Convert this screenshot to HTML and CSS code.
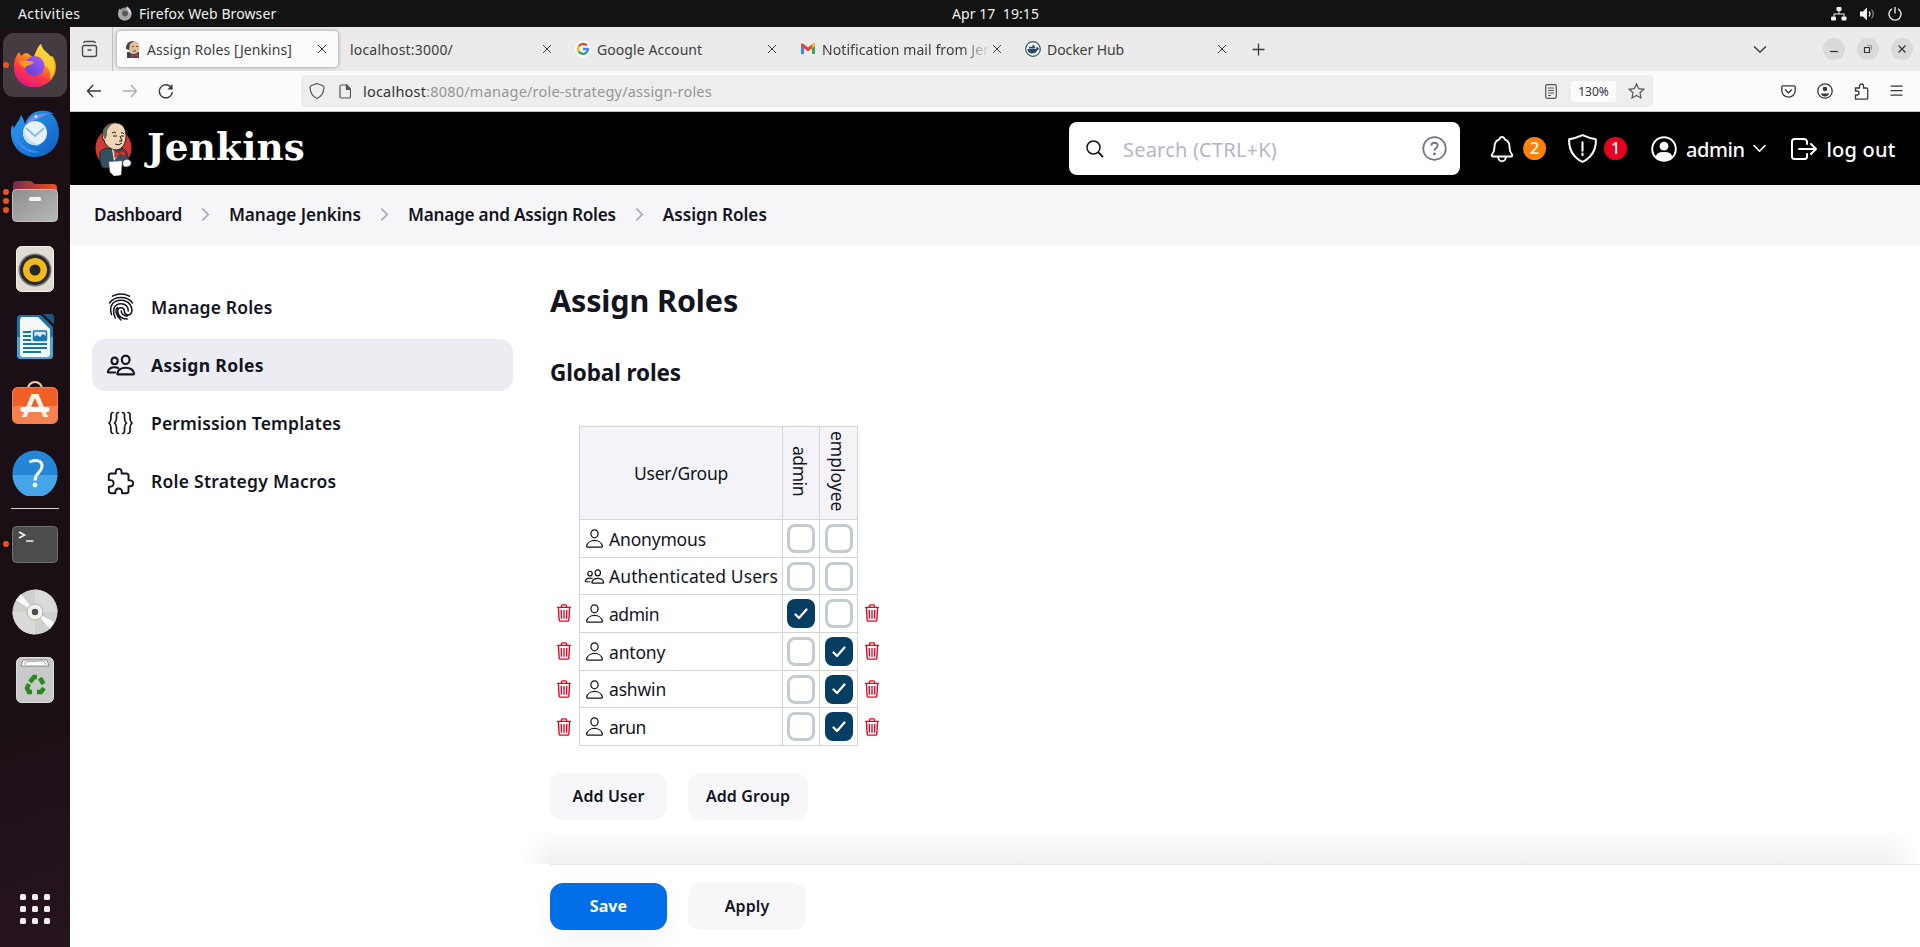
FILE: index.html
```html
<!DOCTYPE html>
<html lang="en">
<head>
<meta charset="utf-8">
<title>Assign Roles [Jenkins]</title>
<link rel="stylesheet" href="styles.css">
</head>
<body>
<svg class="defs" width="0" height="0">
  <defs>
    <symbol id="person" viewBox="0 0 512 512"><path d="M344 144c-3.92 52.87-44 96-88 96s-84.15-43.12-88-96c-4-55 35-96 88-96s92 42 88 96z"/><path d="M256 304c-87 0-175.3 48-191.64 138.6C62.39 453.52 68.57 464 80 464h352c11.44 0 17.62-10.48 15.65-21.4C431.3 352 343 304 256 304z"/></symbol>
    <symbol id="people" viewBox="0 0 512 512"><path d="M402 168c-2.93 40.67-33.1 72-66 72s-63.12-31.32-66-72c-3-42.31 26.37-72 66-72s69 30.46 66 72z"/><path d="M336 304c-65.17 0-127.84 32.37-143.54 95.41-2.08 8.34 3.15 16.59 11.72 16.59h263.65c8.57 0 13.77-8.25 11.72-16.59C463.85 335.36 401.18 304 336 304z"/><path d="M200 185.94c-2.34 32.48-26.72 58.06-53 58.06s-50.7-25.57-53-58.06C91.61 152.15 115.34 128 147 128s55.39 24.77 53 57.94z"/><path d="M206 306c-18.05-8.27-37.93-11.45-59-11.45-52 0-102.1 25.85-114.65 76.2-1.65 6.66 2.53 13.25 9.37 13.25H154"/></symbol>
    <symbol id="trash" viewBox="0 0 512 512"><path d="M112 112l20 320c.95 18.49 14.4 32 32 32h184c17.67 0 30.87-13.51 32-32l20-320M80 112h352M192 112V72a24 24 0 0124-24h80a24 24 0 0124 24v40M256 176v224M184 176l8 224M328 176l-8 224"/></symbol>
    <symbol id="close" viewBox="0 0 10 10"><path d="M1 1l8 8M9 1l-8 8"/></symbol>
    <symbol id="chev" viewBox="0 0 10 16"><path d="M1.500 1.500L8 8l-6.500 6.500"/></symbol>
    <linearGradient id="ffx" x1=".8" y1="0" x2=".3" y2="1"><stop offset="0" stop-color="#fff44f"/><stop offset=".4" stop-color="#ff980e"/><stop offset=".7" stop-color="#ff3647"/><stop offset="1" stop-color="#e31587"/></linearGradient>
    <linearGradient id="ffp" x1="0" y1="1" x2="1" y2="0"><stop offset="0" stop-color="#5b3fd0"/><stop offset="1" stop-color="#a45cff"/></linearGradient>
    <linearGradient id="tb" x1="0" y1="0" x2="1" y2="1"><stop offset="0" stop-color="#2ba0f7"/><stop offset="1" stop-color="#0f5cc0"/></linearGradient>
    <linearGradient id="folder" x1="0" x2="1"><stop offset="0" stop-color="#7c2a50"/><stop offset="1" stop-color="#ea5420"/></linearGradient>
    <linearGradient id="grey" x1="0" y1="0" x2="1" y2="1"><stop offset="0" stop-color="#8e8e8e"/><stop offset="1" stop-color="#b8b8b8"/></linearGradient>
  </defs>
</svg>

<header class="topbar">
  <span class="activities">Activities</span>
  <svg class="app-ic" viewBox="0 0 16 16" width="16" height="16"><circle cx="7.800" cy="8" r="6.500" fill="#8b8b8b"/><path d="M1 8C1 5 2 4 2.500 2.500L5 5l3-1 2-4c2 2 4 3 4.500 7S12 14.500 8 14.500 1 12 1 8z" fill="#a8a8a8"/><circle cx="8" cy="7.500" r="3" fill="#5a5a5a"/><path d="M10 1c2 2 4.500 4 4 8-1-3-4-4-4-8z" fill="#e4e4e4"/></svg>
  <span class="appname">Firefox Web Browser</span>
  <span class="clock">Apr 17&nbsp; 19:15</span>
  <div class="status">
    <svg width="16" height="14" viewBox="0 0 16 14" fill="#f2f2f2"><rect x="5.500" y="0" width="5" height="4" rx="1"/><rect x="0" y="9.500" width="5" height="4" rx="1"/><rect x="10.500" y="9.500" width="5" height="4" rx="1"/><path d="M7.500 4h1v2.500h5v3h-1v-2h-9v2h-1v-3h5z"/></svg>
    <svg width="15" height="14" viewBox="0 0 15 14"><path d="M0 4.500h3L7 .5v13L3 9.500H0z" fill="#f2f2f2"/><path d="M9 4.500q2 2.500 0 5" fill="none" stroke="#ddd" stroke-width="1.300"/><path d="M11.500 2.500q3.500 4.500 0 9" fill="none" stroke="#888" stroke-width="1.200"/></svg>
    <svg width="14" height="14" viewBox="0 0 14 14" fill="none" stroke="#e8e8e8" stroke-width="1.400"><path d="M4 1.900a6 6 0 1 0 6 0M7 0v6.500"/></svg>
  </div>
</header>

<div class="desk">
<nav class="dock">
  <div class="slot focus"><i class="dot"></i>
    <svg width="44" height="44" viewBox="0 0 44 44"><path d="M1 24C1 17 3 13 6 9l2 4c2-2 4-3 6-3l6 4c3-3 3-9 8-13 1 6 6 8 9 12 2-0 3 1 3 1 5 8 3 18-2 23C27 48 12 45 6 38 2 33 1 29 1 24z" fill="url(#ffx)"/><path d="M28 1c1 6 6 8 9 12 6 8 6 18 0 24 2-9-3-14-8-16-6-3-8-8-7-10 3-3 3-7 6-10z" fill="#ffd83a" opacity=".75"/><circle cx="21.500" cy="23" r="10" fill="url(#ffp)"/><path d="M6 18c3 0 10-1 15 1-2 4-7 2-9 6-3-1-5-4-6-7z" fill="#ff9a1d"/></svg></div>
  <div class="slot bird">
    <svg width="48" height="48" viewBox="0 0 48 48"><path d="M0 22c0-5 1-6 2-7l1 4c1-5 5-7 7-14 2 3 3 6 4 9C18 3 26 0 34 1c4 0 7 2 9 3h-3c5 3 8 11 8 19 0 13-10 24-24 24C11 47 0 37 0 22z" fill="url(#tb)"/><path d="M16 13C21 4 30 3 40 4c-9 0-12 6-24 9z" fill="#7f8cf2"/><path d="M5 20c0 12 9 20 24 22C16 45 4 36 5 20z" fill="#3b8df0"/><circle cx="24" cy="23" r="12" fill="#e6f1fc"/><path d="M13 18c2 12 8 14 16 17-4 1-8 0-12-2-4-4-6-9-4-15z" fill="#c5dff8"/><path d="M15 18l9 8 9-8" fill="none" stroke="#8bb9e8" stroke-width="1.800"/><circle cx="25" cy="6.500" r="1.300" fill="#fff"/></svg></div>
  <div class="slot"><i class="dot upper"></i><i class="dot"></i><i class="dot lower"></i>
    <svg width="46" height="42" viewBox="0 0 46 42"><path d="M1 5a4 4 0 0 1 4-4h13c3 0 3 3 5 3h18a4 4 0 0 1 4 4v12H1z" fill="url(#folder)"/><rect x=".5" y="9.500" width="45" height="32" rx="4" fill="url(#grey)" stroke="#c0c0c0"/><rect x="17" y="17" width="12" height="4" rx="1.500" fill="#f5f5f5"/></svg></div>
  <div class="slot">
    <svg width="38" height="46" viewBox="0 0 38 46"><rect x=".5" y=".5" width="37" height="45" rx="5" fill="#e0dcd3" stroke="#f3f0e9"/><circle cx="19" cy="24" r="16.500" fill="#777"/><circle cx="19" cy="24" r="15" fill="#2b2930"/><circle cx="19" cy="24" r="12" fill="#f0b91c"/><circle cx="19" cy="24" r="5.500" fill="#26252b"/></svg></div>
  <div class="slot">
    <svg width="38" height="46" viewBox="0 0 38 46"><path d="M4 1h21l12 12v28a4 4 0 0 1-4 4H5a4 4 0 0 1-4-4V5a4 4 0 0 1 3-4z" fill="#1b75a9"/><path d="M1 23h36v18a4 4 0 0 1-4 4H5a4 4 0 0 1-4-4z" fill="#4aa6d8"/><path d="M6 3h16l12 12v25a3 3 0 0 1-3 3H7a3 3 0 0 1-3-3V6a3 3 0 0 1 2-3z" fill="#f5f6f7"/><path d="M27 0h8a3 3 0 0 1 3 3v7z" fill="#185a80"/><path d="M7 18h8M7 22h8M7 26h8M7 30h24M7 34h24M7 38h18" stroke="#1576b0" stroke-width="2"/><rect x="17.500" y="17" width="13" height="9.500" rx="1" fill="#cfe3f0" stroke="#1576b0" stroke-width="1.500"/><path d="M18 26v-3l3-2 3 2 3-3 3 2v4z" fill="#1576b0"/></svg></div>
  <div class="slot shop">
    <svg width="46" height="44" viewBox="0 0 46 44"><path d="M16 9a7 7 0 0 1 14 0" fill="none" stroke="#f1cf9c" stroke-width="2"/><rect x=".5" y="7.500" width="45" height="36" rx="5" fill="#ef5f26" stroke="#f4824f"/><path d="M1 26h44v12a5 5 0 0 1-5 5H6a5 5 0 0 1-5-5z" fill="#f58350"/><path d="M10 37l9.500-23h7L36 37h-4.500L23 18l-8.500 19z" fill="#fff3ec"/><rect x="8.500" y="27" width="29" height="5" rx="2.500" fill="#fff"/></svg></div>
  <div class="slot">
    <svg width="46" height="46" viewBox="0 0 46 46"><circle cx="23" cy="23" r="22.500" fill="#2586d8"/><path d="M.5 25h45a22.500 22.500 0 0 1-45 0z" fill="#45a5e6"/><path d="M17.500 12c6-3 13-1.500 12.500 4.500-.5 6-7 6.500-7 14" fill="none" stroke="#fff" stroke-width="3"/><circle cx="23" cy="35" r="2.400" fill="#fff"/></svg></div>
  <div class="sep"></div>
  <div class="slot"><i class="dot"></i>
    <svg width="46" height="37" viewBox="0 0 46 37"><rect x=".5" y=".5" width="45" height="36" rx="4" fill="#4c4c4c" stroke="#6e716e"/><path d="M7 6l5.500 3L7 12M14 15h7.500" fill="none" stroke="#f2f2f2" stroke-width="1.700"/></svg></div>
  <div class="slot">
    <svg width="46" height="46" viewBox="0 0 46 46"><circle cx="23" cy="23" r="22.500" fill="#cfcfcf"/><path d="M23 23V.5A22.500 22.500 0 0 1 45.500 23zM23 23v22.500A22.500 22.500 0 0 1 .5 23z" fill="#dadada"/><path d="M23 23L4 11l5-6zM23 23l19 10-4 7z" fill="#fafafa"/><circle cx="23" cy="23" r="8" fill="#f4f3f0" stroke="#b9b09b"/><circle cx="23" cy="23" r="3.200" fill="#4d4d4d"/></svg></div>
  <div class="slot">
    <svg width="38" height="46" viewBox="0 0 38 46"><rect x=".5" y=".5" width="37" height="45" rx="5" fill="#c9c9c9" stroke="#dedede"/><path d="M5 9l2-6h24l2 6z" fill="#fff" stroke="#777" stroke-width=".8"/><path d="M9 8V5l18-1 4 4" fill="none" stroke="#aaa"/><g fill="none" stroke="#268a1c" stroke-width="4.500"><path d="M14 25l4-5h3M24 21l3.500 6M28 31l-3 4h-4M16 35h-3l-2-4 2-4"/></g></svg></div>
  <div class="grow"></div>
  <div class="apps"><i></i><i></i><i></i><i></i><i></i><i></i><i></i><i></i><i></i></div>
</nav>

<main class="window">
  <div class="tabstrip">
    <div class="viewbtn"><svg width="18" height="18" viewBox="0 0 18 18" fill="none" stroke="#4a4a4a" stroke-width="1.400"><rect x="1.500" y="5.500" width="14" height="11" rx="2"/><path d="M2.500 3q.5-1.500 2-1.500h8q1.500 0 2 1.500M6.500 10h4"/></svg></div>
    <div class="tab active">
      <svg class="fav" width="16" height="17" viewBox="0 0 16 17"><path d="M2 17V11h12v6z" fill="#33485a"/><path d="M2 5C3 1 6 0 9 0s6 3 5.500 7-3 6-6 6-4.500-2-5-5S2 6 2 5z" fill="#dfbf9d"/><path d="M1 8C1 2 4 0 9 0L5 3 4 9z" fill="#4b4440"/><path d="M7 5.500h2M11 5.500h2M8 10h3" stroke="#6b4536"/><path d="M6 13l3 1.500 4-1.500v3l-3-1-3 2z" fill="#d33833"/></svg>
      <span class="t1">Assign Roles [Jenkins]</span><svg class="x" width="10" height="10"><use href="#close"/></svg></div>
    <div class="tab"><span class="t2">localhost:3000/</span><svg class="x" width="10" height="10"><use href="#close"/></svg></div>
    <div class="tab">
      <svg class="fav" width="16" height="16" viewBox="0 0 16 16"><circle cx="8" cy="8" r="8" fill="#fff"/><g fill="none" stroke-width="2.400"><path d="M11.800 4.500A4.900 4.900 0 0 0 3.800 5.500" stroke="#ea4335"/><path d="M3.900 5.300a4.900 4.900 0 0 0 0 5.300" stroke="#fbbc05"/><path d="M3.800 10.400a4.900 4.900 0 0 0 7.500 1.200" stroke="#34a853"/><path d="M8 8h4.900a4.900 4.900 0 0 1-1.700 3.700" stroke="#4285f4"/></g></svg>
      <span class="t3">Google Account</span><svg class="x" width="10" height="10"><use href="#close"/></svg></div>
    <div class="tab">
      <svg class="fav" width="16" height="16" viewBox="0 0 16 16"><path d="M1 3v10h3V5z" fill="#4285f4"/><path d="M15 3v10h-3V5z" fill="#34a853"/><path d="M1 3.500Q1 2 2.800 2.500L8 6.500l5.200-4Q15 2 15 3.500V5L8 10.500 1 5z" fill="#ea4335"/><path d="M12 3.500l1.200-1Q15 2 15 3.500V5l-3 2.300z" fill="#fbbc04"/></svg>
      <span class="t4 fade">Notification mail from Jen</span><svg class="x" width="10" height="10"><use href="#close"/></svg></div>
    <div class="tab">
      <svg class="fav" width="16" height="16" viewBox="0 0 16 16"><circle cx="8" cy="8" r="7.300" fill="#f5f8fa" stroke="#36566b" stroke-width="1.200"/><path d="M2.500 8h8.500q0-1.500 1-2.500 1 .5 1 1.700l1.500.3Q14 8.800 12.500 9 11 12.500 7 12.500 3 12.500 2.500 8zM4 5.800h6v1.700H4zM7.500 4h1.800v2H7.500z" fill="#294b61"/></svg>
      <span class="t5">Docker Hub</span><svg class="x" width="10" height="10"><use href="#close"/></svg></div>
    <svg class="plus" width="13" height="13" viewBox="0 0 13 13"><path d="M6.500 .5v12M.5 6.500h12"/></svg>
    <div class="grow"></div>
    <svg class="list" width="14" height="9" viewBox="0 0 14 9"><path d="M1 1.500l6 5.500 6-5.500"/></svg>
    <div class="wbtns">
      <b><svg width="10" height="10" viewBox="0 0 10 10"><path d="M1 7.500h8"/></svg></b>
      <b><svg width="10" height="10" viewBox="0 0 10 10"><path d="M1.500 3.500h5v5h-5z"/><path d="M4 1.500h4.500V6" stroke="#888" stroke-width=".8"/></svg></b>
      <b><svg width="10" height="10" viewBox="0 0 10 10"><path d="M1.500 1.500l7 7M8.500 1.500l-7 7"/></svg></b>
    </div>
  </div>

  <div class="toolbar">
    <svg class="nav" width="16" height="14" viewBox="0 0 16 14"><path d="M7 1L1.500 7 7 13M1.500 7H15"/></svg>
    <svg class="nav off" width="16" height="14" viewBox="0 0 16 14"><path d="M9 1l5.500 6L9 13M14.500 7H1"/></svg>
    <svg class="nav" width="16" height="16" viewBox="0 0 16 16"><path d="M14 6.200A6.500 6.500 0 1 0 14.300 9"/><path d="M14.500 1v5.500H9.500z" fill="#3a3a3a" stroke="none"/></svg>
    <div class="url">
      <svg class="shield" width="16" height="18" viewBox="0 0 16 18"><path d="M8 1.500l6 2.300c1 .3 1 1 1 2C14.500 11 12 15 8 16.500 4 15 1.500 11 1 5.800c0-1 0-1.700 1-2z"/></svg>
      <svg class="page" width="12" height="15" viewBox="0 0 12 15"><path d="M2.500 1H8l3.500 4v7.500a1.500 1.500 0 0 1-1.500 1.500H2.500A1.500 1.500 0 0 1 1 12.500v-10A1.500 1.500 0 0 1 2.500 1zM7.500 1v4.500h4" /><path d="M7.500 1l4 4.500h-4z" fill="#555"/></svg>
      <span class="addr"><b>localhost</b>:8080/manage/role-strategy/assign-roles</span>
      <div class="grow"></div>
      <svg class="reader" width="12" height="15" viewBox="0 0 12 15"><rect x=".7" y=".7" width="10.600" height="13.600" rx="1.500"/><path d="M3 4h6M3 6.500h6M3 9h6M3 11.500h3"/></svg>
      <span class="zoom">130%</span>
      <svg class="star" width="17" height="16" viewBox="0 0 17 16"><path d="M8.500 1l2.200 4.700 5.100.6-3.800 3.500 1 5.100-4.500-2.500L4 14.900l1-5.100L1.200 6.300l5.100-.6z"/></svg>
    </div>
    <div class="grow"></div>
    <div class="tools">
      <svg width="15" height="13" viewBox="0 0 15 13"><path d="M2 .8h11a1.200 1.200 0 0 1 1.200 1.200v3.500a6.700 6.700 0 0 1-13.400 0V2A1.200 1.200 0 0 1 2 .8zM4 4.500l3.500 3.300L11 4.500"/></svg>
      <svg width="16" height="16" viewBox="0 0 16 16"><circle cx="8" cy="8" r="7.200"/><circle cx="8" cy="6" r="2.300" fill="#3a3a3a" stroke="none"/><path d="M3.800 10.500h8.400Q11 13.500 8 13.500T3.800 10.500z" fill="#3a3a3a" stroke="none"/></svg>
      <svg width="15" height="17" viewBox="0 0 15 17"><path d="M1.500 5h4V3a2 2 0 0 1 4 0v2h3a1.200 1.200 0 0 1 1.200 1.200V15a1.200 1.200 0 0 1-1.200 1.200H1.500V12H3a2 2 0 0 0 0-4H1.500z"/></svg>
      <svg width="13" height="12" viewBox="0 0 13 12"><path d="M.5 1.200h12M.5 5.700h12M.5 10.200h12"/></svg>
    </div>
  </div>

  <div class="jhead">
    <svg class="butler" width="38" height="54" viewBox="0 0 38 54"><ellipse cx="18.500" cy="26" rx="18" ry="19.500" fill="#d33833"/><path d="M5 30c2-3 6-4 9-4l12 0c4 1 6 4 7 9l3 7c-2 4-6 3-8 1l-2 3H8C4 42 5 36 5 30z" fill="#335061" stroke="#101c24" stroke-width=".8"/><path d="M8 12C9 3 17 0 22 1c7 1 9 7 9 13 0 8-4 13-9 14-7 0-12-5-13-10-2-1-2-4-1-6z" fill="#f0d6b7" stroke="#1d1918" stroke-width="1"/><path d="M8 13C7 5 13 1 19 1c-4 2-6 5-7 8l0 4-2 5z" fill="#6b6660"/><path d="M17 11q2-2 4 0M26 11q2-1 3 1M18 14h4M26 14h3M25 14l2 5-3 0M20 22q4 2 7-1" fill="none" stroke="#1d1918" stroke-width="1"/><path d="M17 27l2 12 5-7z" fill="#e6ebee"/><path d="M19 28l5 3 6-3v7l-5-3-5 4z" fill="#d33833" stroke="#811" stroke-width=".5"/><path d="M14 40l13-1-1 14-7 1-4-4z" fill="#fff" stroke="#bbb" stroke-width=".4"/><path d="M28 39c3-3 7-2 8 1 1 3-2 5-5 5s-4-2-3-6z" fill="#f4f4f4" stroke="#222" stroke-width=".7"/></svg>
    <span class="brand">Jenkins</span>
    <div class="search">
      <svg width="18" height="18" viewBox="0 0 18 18" fill="none" stroke="#14141f" stroke-width="1.500"><circle cx="7.500" cy="7.500" r="6.500"/><path d="M12.200 12.200L17 17" stroke-width="1.800"/></svg>
      <span class="ph">Search (CTRL+K)</span>
      <div class="grow"></div>
      <svg width="25" height="25" viewBox="0 0 25 25" fill="none" stroke="#73738c" stroke-width="1.700"><circle cx="12.500" cy="12.500" r="11.300"/><path d="M9.300 9.600c.2-4 6.500-3.700 6.400 0 0 2.400-3.200 2.400-3.200 5.200" stroke-width="1.900"/><circle cx="12.500" cy="18" r=".6"/></svg>
    </div>
    <svg class="bell" width="30" height="30" viewBox="0 0 512 512"><path d="M427.680 351.430C402 320 383.870 304 383.870 217.350 383.870 138 343.350 109.730 310 96c-4.430-1.820-8.600-6-9.950-10.550C294.200 65.540 277.800 48 256 48s-38.210 17.550-44 37.470c-1.350 4.600-5.520 8.710-9.950 10.530-33.390 13.750-73.870 41.920-73.870 121.350C128.130 304 110 320 84.320 351.430 73.680 364.450 83 384 101.610 384h308.880c18.510 0 27.770-19.610 17.190-32.570zM320 384v16a64 64 0 01-128 0v-16"/></svg>
    <span class="badge orange">2</span>
    <svg class="guard" width="33" height="33" viewBox="0 0 512 512"><path d="M463.100 112.370C373.680 96.330 336.710 84.450 256 48c-80.710 36.450-117.680 48.330-207.100 64.370C32.700 369.130 240.580 457.790 256 464c15.420-6.210 223.300-94.870 207.100-351.630zM256 160v130M256 335v25"/></svg>
    <span class="badge red">1</span>
    <svg class="user" width="26" height="26" viewBox="0 0 26 26"><circle cx="13" cy="13" r="11.800" fill="none" stroke="#fff" stroke-width="2"/><circle cx="13" cy="10.200" r="4.400" fill="#fff"/><path d="M4.700 20.500C6 16.500 9.500 16 13 16s7 .5 8.300 4.500q-3.500 4-8.300 4t-8.300-4z" fill="#fff"/></svg>
    <span class="uname">admin</span>
    <svg class="caret" width="13" height="9" viewBox="0 0 13 9"><path d="M1 1.500l5.500 5.700L12 1.500"/></svg>
    <svg class="out" width="32" height="32" viewBox="0 0 512 512"><path d="M304 336v40a40 40 0 01-40 40H104a40 40 0 01-40-40V136a40 40 0 0140-40h152c22.090 0 48 17.910 48 40v40M368 336l80-80-80-80M176 256h256"/></svg>
    <span class="logout">log out</span>
  </div>

  <div class="crumbs">
    <span class="c1">Dashboard</span><svg class="sepc" width="9" height="15"><use href="#chev"/></svg>
    <span class="c2">Manage Jenkins</span><svg class="sepc" width="9" height="15"><use href="#chev"/></svg>
    <span class="c3">Manage and Assign Roles</span><svg class="sepc" width="9" height="15"><use href="#chev"/></svg>
    <span class="c4">Assign Roles</span>
  </div>

  <div class="page-body">
    <aside class="side">
      <a class="item"><svg width="30" height="28" viewBox="-1 0 30 28" stroke-width="1.500"><path d="M5.500 3.200Q14-1 22.500 3.200M2.500 10C7.500 2.500 20.500 2.500 25.500 10M4.500 21.500C1.500 12 7 7.200 14 7.200c8 0 12.500 7.300 10.300 12.800-2.300 3.500-7 1.500-7-2 0-4.500-6.600-4.500-6.600 0 0 5 4 8 9.500 8M8.300 25C4.500 17 7.500 10.700 14 10.700c5 0 7.500 3.500 7.200 7.300M14 27c-5-4.500-6.500-10-3.500-12.300M14.200 18c0 3 3 5 6.300 5"/></svg><span class="s1">Manage Roles</span></a>
      <a class="item current"><svg width="30" height="30" stroke-width="36"><use href="#people"/></svg><span class="s2">Assign Roles</span></a>
      <a class="item"><svg width="30" height="24" viewBox="-1 0 30 24" stroke-width="1.700"><path d="M6 1.500C3.500 1.500 4 4 4 7s-.5 4-2 5c1.500 1 2 2 2 5s-.5 5.500 2 5.500M11.500 1.500C9 1.500 9.500 4 9.500 7S9 11 7.500 12c1.500 1 2 2 2 5s-.5 5.500 2 5.500M15.500 1.500c2.500 0 2 2.500 2 5.500s.5 4 2 5c-1.500 1-2 2-2 5s.5 5.500-2 5.500M21 1.500c2.500 0 2 2.500 2 5.500s.5 4 2 5c-1.500 1-2 2-2 5s.5 5.500-2 5.500"/></svg><span class="s3">Permission Templates</span></a>
      <a class="item"><svg width="30" height="30" viewBox="0 0 512 512" stroke-width="32"><path d="M413.660 246.100H386a2 2 0 01-2-2v-77.240A38.860 38.860 0 00345.140 128H267.900a2 2 0 01-2-2V98.340c0-27.140-21.500-49.860-48.640-50.330a49.530 49.530 0 00-50.400 49.510V126a2 2 0 01-2 2H87.620A39.740 39.740 0 0048 167.620V238a2 2 0 002 2h26.910c29.370 0 53.680 25.480 54.090 54.850.42 29.870-23.510 57.150-53.290 57.150H50a2 2 0 00-2 2v70.380A39.740 39.740 0 0087.620 464H158a2 2 0 002-2v-20.930c0-30.280 24.750-56.350 55-57.060 30.100-.7 57 20.310 57 50.280V462a2 2 0 002 2h71.140A38.860 38.860 0 00384 425.140v-78a2 2 0 012-2h28.480c27.630 0 49.520-22.670 49.520-50.400s-23.200-48.640-50.340-48.640z"/></svg><span class="s4">Role Strategy Macros</span></a>
    </aside>

    <section class="main">
      <h1>Assign Roles</h1>
      <h2>Global roles</h2>
      <div class="roles">
        <div class="row"><div class="end"></div><div class="cell hd"><span class="ug">User/Group</span></div><div class="cell hd"><span class="v v1">admin</span></div><div class="cell hd"><span class="v">employee</span></div><div class="end r"></div></div>
        <div class="row"><div class="end"></div><div class="cell name"><svg><use href="#person"/></svg><span>Anonymous</span></div><div class="cell"><i class="cb"></i></div><div class="cell"><i class="cb"></i></div><div class="end r"></div></div>
        <div class="row"><div class="end"></div><div class="cell name"><svg><use href="#people"/></svg><span class="wide">Authenticated Users</span></div><div class="cell"><i class="cb"></i></div><div class="cell"><i class="cb"></i></div><div class="end r"></div></div>
        <div class="row"><div class="end"><svg><use href="#trash"/></svg></div><div class="cell name"><svg><use href="#person"/></svg><span class="tight">admin</span></div><div class="cell"><i class="cb on"><svg viewBox="0 0 14 12"><path d="M1.500 6.500L5 10l7.500-8.500"/></svg></i></div><div class="cell"><i class="cb"></i></div><div class="end r"><svg><use href="#trash"/></svg></div></div>
        <div class="row"><div class="end"><svg><use href="#trash"/></svg></div><div class="cell name"><svg><use href="#person"/></svg><span>antony</span></div><div class="cell"><i class="cb"></i></div><div class="cell"><i class="cb on"><svg viewBox="0 0 14 12"><path d="M1.500 6.500L5 10l7.500-8.500"/></svg></i></div><div class="end r"><svg><use href="#trash"/></svg></div></div>
        <div class="row"><div class="end"><svg><use href="#trash"/></svg></div><div class="cell name"><svg><use href="#person"/></svg><span>ashwin</span></div><div class="cell"><i class="cb"></i></div><div class="cell"><i class="cb on"><svg viewBox="0 0 14 12"><path d="M1.500 6.500L5 10l7.500-8.500"/></svg></i></div><div class="end r"><svg><use href="#trash"/></svg></div></div>
        <div class="row last"><div class="end"><svg><use href="#trash"/></svg></div><div class="cell name"><svg><use href="#person"/></svg><span class="tight">arun</span></div><div class="cell"><i class="cb"></i></div><div class="cell"><i class="cb on"><svg viewBox="0 0 14 12"><path d="M1.500 6.500L5 10l7.500-8.500"/></svg></i></div><div class="end r"><svg><use href="#trash"/></svg></div></div>
      </div>
      <div class="buttons add">
        <button class="b1">Add User</button>
        <button class="b2">Add Group</button>
      </div>
      <div class="shade"></div>
      <div class="bottom">
        <div class="buttons">
          <button class="b1 primary">Save</button>
          <button class="b3">Apply</button>
        </div>
      </div>
    </section>
  </div>
</main>
</div>
</body>
</html>
```

FILE: styles.css
```css
* { box-sizing: border-box; }
body {
  margin: 0;
  width: 1920px;
  height: 947px;
  overflow: hidden;
  background: #fff;
  color: #14141f;
  font-family: "Noto Sans", "Open Sans", sans-serif;
}
svg { display: block; flex: none; }
span { white-space: nowrap; }
.defs { position: absolute; }
.grow { flex: 1; }

/* GNOME top bar */
.topbar {
  display: grid;
  grid-template-columns: 99px 22px 813px 1fr auto;
  align-items: center;
  height: 27px;
  padding: 0 18px;
  background: #131313;
  color: #f0f0f0;
  font-size: 14px;
  line-height: 26px;
}
.topbar span { justify-self: start; }
.activities { letter-spacing: .4px; }
.appname { letter-spacing: .1px; }
.clock { letter-spacing: .07px; }
.status { display: flex; align-items: center; gap: 13px; }
.desk { display: flex; height: 920px; }

/* dock */
.dock {
  display: flex;
  flex: none;
  flex-direction: column;
  align-items: center;
  width: 70px;
  padding-top: 6px;
  background: linear-gradient(160deg, #1b0f16 75%, #26141f);
}
.slot {
  position: relative;
  display: flex;
  align-items: center;
  justify-content: center;
  width: 64px;
  height: 64px;
  margin-bottom: 4px;
  flex: none;
}
.focus { background: #453c42; border-radius: 11px; }
.bird svg { margin-top: 2px; }
.shop svg { margin-top: -6px; }
.dot {
  position: absolute;
  left: 0;
  top: 29px;
  width: 6px;
  height: 6px;
  border-radius: 50%;
  background: #e95420;
}
.upper { top: 20px; }
.lower { top: 38px; }
.sep { width: 48px; height: 1px; background: #d5d2d4; margin: -1px 0 3px; }
.apps {
  display: grid;
  grid-template-columns: repeat(3, 6px);
  gap: 6px;
  margin-bottom: 23px;
}
.apps i { height: 6px; background: #f0eeec; border-radius: 1.500px; }

/* browser window */
.window { flex: 1; min-width: 0; display: flex; flex-direction: column; }
.tabstrip {
  display: flex;
  align-items: center;
  height: 44px;
  background: #ebebeb;
  color: #3d3d3d;
  font-size: 14px;
  letter-spacing: .08px;
}
.viewbtn {
  display: flex;
  align-items: center;
  width: 43px;
  height: 44px;
  padding-left: 11px;
  border-right: 1px solid #bfbfbf;
}
.tab {
  display: flex;
  align-items: center;
  width: 221px;
  height: 36px;
  margin: 0 0 0 4px;
  padding: 0 11px 0 8px;
  border-radius: 4px;
}
.tab.active { background: #fbfbfb; box-shadow: 0 0 4px rgba(0, 0, 0, .4); }
.tab span { flex: 1; overflow: hidden; }
.t2 { letter-spacing: .19px; }
.t5 { letter-spacing: -.08px; }
.fav { margin-right: 6px; }
.x { fill: none; stroke: #3d3d3d; stroke-width: 1; }
.fade { mask-image: linear-gradient(90deg, #000 82%, transparent 99%); }
.plus { margin-left: 14px; fill: none; stroke: #3a3a3a; stroke-width: 1.300; }
.list { margin-right: 56px; fill: none; stroke: #3a3a3a; stroke-width: 1.300; }
.wbtns { display: flex; gap: 12px; margin-right: 7px; }
.wbtns b {
  display: flex;
  align-items: center;
  justify-content: center;
  width: 22px;
  height: 22px;
  border-radius: 50%;
  background: #dadada;
}
.wbtns svg { fill: none; stroke: #333; stroke-width: 1.200; }
.toolbar {
  display: flex;
  align-items: center;
  height: 41px;
  padding-left: 16px;
  background: #fbfbfb;
  border-bottom: 1px solid #c6c6c6;
}
.nav { margin-right: 20px; fill: none; stroke: #3a3a3a; stroke-width: 1.400; }
.off { opacity: .4; }
.url {
  display: flex;
  align-items: center;
  width: 1352px;
  height: 32px;
  margin-left: 107px;
  padding: 0 8px 0 8px;
  border-radius: 4px;
  background: #eee;
  color: #959595;
  font-size: 14.500px;
}
.url svg { fill: none; stroke: #555; stroke-width: 1.200; }
.url b { color: #333; font-weight: 400; }
.addr { letter-spacing: .21px; }
.shield { margin-right: 14px; }
.page { margin-right: 12px; }
.zoom {
  width: 45px;
  height: 21px;
  margin: 0 12px 0 14px;
  border-radius: 3px;
  background: #fbfbfb;
  color: #333;
  font-size: 12px;
  line-height: 21px;
  text-align: center;
}
.tools { display: flex; align-items: center; gap: 21px; margin-right: 17px; }
.tools svg { fill: none; stroke: #3a3a3a; stroke-width: 1.300; }

/* Jenkins header */
.jhead {
  display: flex;
  align-items: center;
  height: 73px;
  padding: 0 0 0 25px;
  background: #000;
  color: #fff;
  font-size: 20px;
  font-weight: 500;
}
.brand {
  flex: none;
  width: 158px;
  margin: -3px 0 0 14px;
  font-family: "DejaVu Serif", serif;
  font-weight: 700;
  font-size: 37.300px;
  line-height: 44px;
  letter-spacing: .2px;
}
.search {
  display: flex;
  flex: none;
  align-items: center;
  width: 391px;
  height: 53px;
  margin-left: 764px;
  padding: 0 13px 0 17px;
  border-radius: 8px;
  background: #fff;
  color: #b5b5c8;
  font-weight: 400;
}
.ph, .uname, .logout { padding-top: 1px; }
.ph { margin-left: 19px; letter-spacing: .2px; }
.uname { letter-spacing: -.45px; }
.logout { letter-spacing: .2px; }
.bell, .guard, .out, .caret { fill: none; stroke: #fff; stroke-width: 32; stroke-linecap: round; stroke-linejoin: round; }
.bell { margin: 0 6px 0 27px; }
.guard { margin: 0 5px 0 20px; }
.badge {
  flex: none;
  width: 23px;
  height: 23px;
  border-radius: 50%;
  font-size: 16px;
  line-height: 23px;
  text-align: center;
}
.orange { background: #fe820a; }
.red { background: #e6001f; }
.user { margin: 0 9px 0 24px; }
.caret { margin: 0 22px 0 9px; stroke-width: 1.600; }
.out { margin-right: 6px; }
.crumbs {
  display: flex;
  align-items: center;
  height: 60px;
  padding: 0 0 2px 24px;
  background: #f6f6f9;
  font-size: 17.200px;
  font-weight: 600;
}
.sepc { margin: 0 19px; fill: none; stroke: #a5a5b8; stroke-width: 1.800; }
.c1 { letter-spacing: -.38px; }
.c2 { letter-spacing: -.08px; }
.c3 { letter-spacing: -.23px; }
.c4 { letter-spacing: -.05px; }

/* page body */
.page-body { display: flex; flex: 1; }
.side {
  display: flex;
  flex-direction: column;
  gap: 6px;
  width: 443px;
  padding: 36px 0 0 22px;
}
.item {
  display: flex;
  align-items: center;
  height: 52px;
  padding-left: 14px;
  border-radius: 13px;
  font-size: 17.500px;
  font-weight: 600;
  letter-spacing: .16px;
}
.item svg { margin-right: 15px; fill: none; stroke: #14141f; stroke-linecap: round; stroke-linejoin: round; }
.current { background: #ecedf3; font-weight: 700; letter-spacing: .35px; }
.s4 { letter-spacing: .25px; }
.main { flex: 1; display: flex; flex-direction: column; padding-left: 37px; }
h1, h2 { font-weight: 700; letter-spacing: -.12px; }
h1 { margin: 33px 0 0; font-size: 30.500px; line-height: 44px; }
h2 { margin: 35px 0 0; font-size: 22.500px; line-height: 32px; }
.roles {
  display: grid;
  grid-template-columns: 29px 203px 37px 38px 40px;
  grid-template-rows: 93px 38px 37px 38px 38px 37px 39px;
  margin-top: 37px;
  font-size: 17.500px;
}
.row { display: contents; }
.cell {
  display: flex;
  align-items: center;
  justify-content: center;
  border-left: 1px solid #d4d4d0;
  border-top: 1px solid #d4d4d0;
}
.hd { background: #f3f3f8; }
.ug { letter-spacing: -.26px; }
.name { justify-content: flex-start; padding-left: 4px; letter-spacing: -.18px; }
.name .wide { letter-spacing: .1px; }
.name .tight, .v1 { letter-spacing: -.45px; }
.name svg { width: 21px; height: 21px; margin-right: 4px; fill: none; stroke: #14141f; stroke-width: 30; }
.v { writing-mode: vertical-rl; line-height: 24px; margin: 0 2px 3px 0; }
.last .cell { border-bottom: 1px solid #d4d4d0; }
.end { display: flex; align-items: center; padding-left: 4px; }
.end.r { border-left: 1px solid #d4d4d0; padding-left: 4px; }
.row:first-child .end.r { border-left-color: #d4d4d0; }
.end svg { width: 20px; height: 20px; fill: none; stroke: #e6001f; stroke-width: 34; }
.cb {
  display: flex;
  align-items: center;
  justify-content: center;
  width: 28px;
  height: 29px;
  border: 3px solid #c3ccd1;
  border-radius: 8px;
}
.cb.on { border: 0; background: #063d62; }
.cb svg { width: 14px; height: 12px; fill: none; stroke: #fff; stroke-width: 2.200; stroke-linecap: round; stroke-linejoin: round; }
.buttons { display: flex; gap: 21px; }
.add { margin-top: 27px; }
button {
  height: 47px;
  padding: 0 0 1px;
  border: 0;
  border-radius: 13px;
  background: #f7f7fa;
  color: #14141f;
  font: 600 16px "Noto Sans", sans-serif;
  letter-spacing: .1px;
}
.b1 { width: 117px; }
.b2 { width: 120px; }
.b3 { width: 118px; }
.primary { background: #006ee6; color: #fff; font-weight: 700; box-shadow: 0 8px 28px rgba(0, 0, 0, .05); }
.shade {
  height: 36px;
  margin: 8px 0 0 -28px;
  background: linear-gradient(#fff, #f1f1f1);
  mask-image: linear-gradient(90deg, transparent, #000 28px, #000 calc(100% - 32px), transparent);
}
.bottom { flex: 1; padding-top: 18px; border-top: 1px solid #e9e9e9; }
```
